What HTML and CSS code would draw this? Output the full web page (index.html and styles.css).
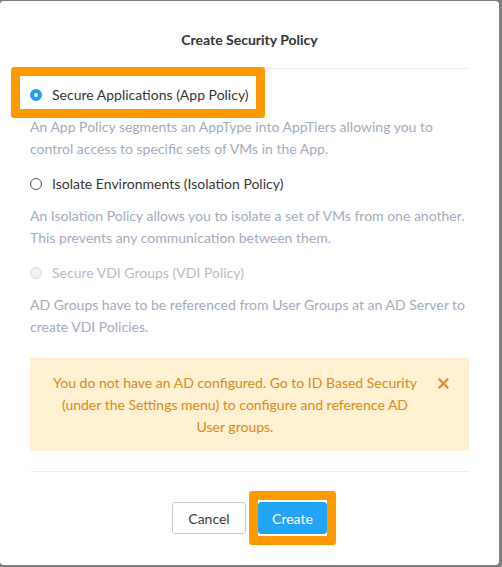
FILE: index.html
```html
<!DOCTYPE html>
<html>
<head>
<meta charset="utf-8">
<link rel="stylesheet" href="styles.css">
</head>
<body>
<div class="modal">
  <div class="modal-header">Create Security Policy</div>
  <div class="modal-body">
    <div class="option">
      <span class="radio checked"></span>
      <span class="label">Secure Applications (App Policy)</span>
    </div>
    <p class="desc">An App Policy segments an AppType into AppTiers allowing you to control access to specific sets of VMs in the App.</p>
    <div class="option">
      <span class="radio"></span>
      <span class="label">Isolate Environments (Isolation Policy)</span>
    </div>
    <p class="desc">An Isolation Policy allows you to isolate a set of VMs from one another. This prevents any communication between them.</p>
    <div class="option disabled">
      <span class="radio"></span>
      <span class="label">Secure VDI Groups (VDI Policy)</span>
    </div>
    <p class="desc">AD Groups have to be referenced from User Groups at an AD Server to create VDI Policies.</p>
    <div class="alert">
      <p class="alert-text">You do not have an AD configured. Go to ID Based Security (under the Settings menu) to configure and reference AD User groups.</p>
      <span class="alert-close">
        <svg width="11" height="11" viewBox="0 0 11 11"><path d="M1.5 1.5 L9.5 9.5 M9.5 1.5 L1.5 9.5" stroke="#d98a1a" stroke-width="2" stroke-linecap="square" fill="none"/></svg>
      </span>
    </div>
  </div>
  <div class="modal-footer">
    <button class="btn btn-cancel">Cancel</button>
    <button class="btn btn-primary">Create</button>
  </div>
  <div class="annot annot-option"></div>
  <div class="annot annot-create"></div>
</div>
</body>
</html>
```
FILE: styles.css
```css
html, body {
  margin: 0;
  padding: 0;
}
body {
  background: #7f7f7f;
  font-family: Lato, "Noto Sans", sans-serif;
  font-size: 14px;
  color: #363636;
}
.modal {
  position: relative;
  width: 499px;
  height: 564px;
  margin-top: 1px;
  background: #fff;
  border-radius: 4px;
  box-sizing: border-box;
}
.modal-header {
  margin: 0 30px;
  padding: 29px 0 18px;
  line-height: 20px;
  text-align: center;
  font-weight: 700;
  font-size: 14px;
  color: #333;
  border-bottom: 1px solid #eceef1;
}
.modal-body {
  padding: 15px 30px 0;
}
.option {
  display: flex;
  align-items: center;
  gap: 10px;
  height: 22px;
  line-height: 22px;
  color: #363636;
}
.radio {
  width: 12px;
  height: 12px;
  border-radius: 50%;
  box-sizing: border-box;
  border: 1px solid #555a60;
  background: #fff;
  flex: none;
}
.radio.checked {
  border: 4px solid #1f9ff3;
  background: #fff;
}
.option.disabled { color: #b6bcc7; }
.option.disabled .radio {
  border-color: #d3d7dd;
  background: #f1f2f4;
}
.desc {
  margin: 10px 0 13px;
  line-height: 22px;
  color: #a3acbc;
}
.alert {
  margin-top: 20px;
  display: flex;
  background: #fff1d1;
  padding: 14px 0 13px 20px;
  height: 93px;
  box-sizing: border-box;
}
.alert-text {
  margin: 0;
  width: 370px;
  text-align: center;
  line-height: 22px;
  color: #d88b1c;
}
.alert-close {
  margin-left: 18px;
  margin-top: 6px;
  width: 11px;
  height: 11px;
  display: flex;
}
.modal-footer {
  margin: 20px 30px 0;
  border-top: 1px solid #eceef1;
  padding-top: 30px;
  display: flex;
  justify-content: center;
  gap: 12px;
}
.btn {
  height: 32px;
  border-radius: 3px;
  font-family: Lato, "Noto Sans", sans-serif;
  font-size: 14px;
  padding: 0;
  cursor: pointer;
}
.btn-cancel {
  width: 74px;
  background: #fff;
  border: 1px solid #c4c9d2;
  color: #3a3a3a;
}
.btn-primary {
  width: 69px;
  background: #22a5f7;
  border: 1px solid #22a5f7;
  color: #fff;
}
.annot {
  position: absolute;
  border: 9px solid #ff9900;
  border-radius: 3px;
  box-sizing: border-box;
}
.annot-option {
  left: 11px;
  top: 66px;
  width: 254px;
  height: 51px;
}
.annot-create {
  left: 249px;
  top: 490px;
  width: 87px;
  height: 54px;
}
```
